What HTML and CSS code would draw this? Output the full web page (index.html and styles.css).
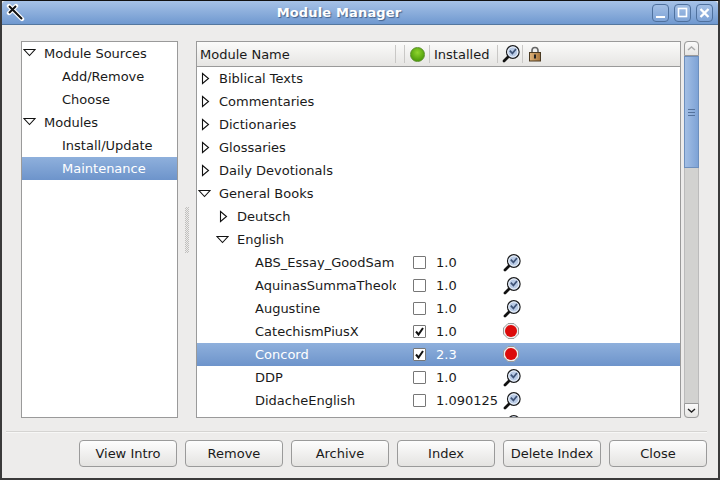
FILE: index.html
```html
<!DOCTYPE html>
<html>
<head>
<meta name="viewport" content="width=device-width, initial-scale=1">
<link rel="stylesheet" href="styles.css">
</head>
<body>

<svg class="defs" width="0" height="0">
  <defs>
    <linearGradient id="brass" x1="0" y1="0" x2="1" y2="0">
      <stop offset="0" stop-color="#e0b57c"/>
      <stop offset="1" stop-color="#a8743a"/>
    </linearGradient>
  </defs>
  <symbol id="tri-right" viewBox="0 0 9 13">
    <path d="M1.5 1.5 L7.5 6.5 L1.5 11.5 Z" fill="#fff" stroke="#111" stroke-width="1.1"/>
  </symbol>
  <symbol id="tri-down" viewBox="0 0 13 9">
    <path d="M1 1.5 L12 1.5 L6.5 7.5 Z" fill="#fff" stroke="#111" stroke-width="1.1"/>
  </symbol>
  <symbol id="lens" viewBox="0 0 18 18">
    <path d="M6 12 L2 16" stroke="#111" stroke-width="2.8" stroke-linecap="round"/>
    <circle cx="10.8" cy="7" r="6.3" fill="#b9cbe6" stroke="#1c1c1c" stroke-width="1.2"/>
    <circle cx="10.8" cy="7" r="5" fill="none" stroke="#eef3fa" stroke-width="1"/>
    <path d="M7.8 5.6 L10.4 8.4 L14 4" fill="none" stroke="#3f5478" stroke-width="1.7"/>
  </symbol>
  <symbol id="stop" viewBox="0 0 16 16">
    <path d="M5 .5 H11 L15.5 5 V11 L11 15.5 H5 L.5 11 V5 Z" fill="#eeeeee" stroke="#9a9a9a"/>
    <circle cx="8" cy="8" r="6" fill="#dc0a0a"/>
  </symbol>
</svg>

<div class="window">
  <div class="titlebar">
    <svg class="app-icon" width="20" height="20" viewBox="0 0 20 20">
      <path d="M3 3 L7.5 7.5 M10 3 L3 10 M7 7 L16 16" stroke="#fff" stroke-width="4.4" stroke-linecap="round"/>
      <path d="M3 3 L7.5 7.5 M10 3 L3 10 M7 7 L16 16" stroke="#111" stroke-width="2"/>
    </svg>
    <div class="title">Module Manager</div>
    <div class="wm-buttons">
      <div class="wm-btn"><svg width="15" height="16" viewBox="0 0 15 16"><path d="M3 12 H12" stroke="#fff" stroke-width="2"/></svg></div>
      <div class="wm-btn"><svg width="15" height="16" viewBox="0 0 15 16"><rect x="3.5" y="3.5" width="8" height="8" fill="none" stroke="#fff" stroke-width="1.6"/></svg></div>
      <div class="wm-btn"><svg width="15" height="16" viewBox="0 0 15 16"><path d="M3.5 4 L11.5 12 M11.5 4 L3.5 12" stroke="#fff" stroke-width="2.4"/></svg></div>
    </div>
  </div>

  <div class="content">
    <div class="panes">
      <div class="side-list">
        <div class="side-row"><svg class="tri-d" width="13" height="9"><use href="#tri-down"/></svg>Module Sources</div>
        <div class="side-row sub">Add/Remove</div>
        <div class="side-row sub">Choose</div>
        <div class="side-row"><svg class="tri-d" width="13" height="9"><use href="#tri-down"/></svg>Modules</div>
        <div class="side-row sub">Install/Update</div>
        <div class="side-row sub selected">Maintenance</div>
      </div>

      <div class="grip"></div>

      <div class="tree">
        <div class="tree-head">
          <div class="head-cell head-name">Module Name</div>
          <div class="head-cell head-gap"></div>
          <div class="head-cell head-dot"><span class="green-dot"></span></div>
          <div class="head-cell head-inst">Installed</div>
          <div class="head-cell head-lens"><svg width="18" height="18"><use href="#lens"/></svg></div>
          <div class="head-cell head-lock">
            <svg width="14" height="16" viewBox="0 0 14 16">
              <path d="M4 7 V4.5 A3 3 0 0 1 10 4.5 V7" fill="none" stroke="#666" stroke-width="1.6"/>
              <rect x="1.5" y="6.5" width="11" height="8.5" fill="url(#brass)" stroke="#4a3a22"/>
              <rect x="6" y="8.5" width="2" height="4" fill="#222"/>
            </svg>
          </div>
        </div>

        <div class="tree-body">
          <div class="row"><div class="name lvl0"><svg class="tri-r" width="9" height="13"><use href="#tri-right"/></svg>Biblical Texts</div></div>
          <div class="row"><div class="name lvl0"><svg class="tri-r" width="9" height="13"><use href="#tri-right"/></svg>Commentaries</div></div>
          <div class="row"><div class="name lvl0"><svg class="tri-r" width="9" height="13"><use href="#tri-right"/></svg>Dictionaries</div></div>
          <div class="row"><div class="name lvl0"><svg class="tri-r" width="9" height="13"><use href="#tri-right"/></svg>Glossaries</div></div>
          <div class="row"><div class="name lvl0"><svg class="tri-r" width="9" height="13"><use href="#tri-right"/></svg>Daily Devotionals</div></div>
          <div class="row"><div class="name lvl0 open"><svg class="tri-d" width="13" height="9"><use href="#tri-down"/></svg>General Books</div></div>
          <div class="row"><div class="name lvl1"><svg class="tri-r" width="9" height="13"><use href="#tri-right"/></svg>Deutsch</div></div>
          <div class="row"><div class="name lvl1 open"><svg class="tri-d" width="13" height="9"><use href="#tri-down"/></svg>English</div></div>

          <div class="row"><div class="name lvl2">ABS_Essay_GoodSam</div><span class="check"></span><div class="ver">1.0</div><svg class="act" width="18" height="18"><use href="#lens"/></svg></div>
          <div class="row"><div class="name lvl2">AquinasSummaTheologica</div><span class="check"></span><div class="ver">1.0</div><svg class="act" width="18" height="18"><use href="#lens"/></svg></div>
          <div class="row"><div class="name lvl2">Augustine</div><span class="check"></span><div class="ver">1.0</div><svg class="act" width="18" height="18"><use href="#lens"/></svg></div>
          <div class="row"><div class="name lvl2">CatechismPiusX</div><span class="check on"><svg width="11" height="11" viewBox="0 0 11 11"><path d="M2 5.5 L4.5 8.5 L9 2" fill="none" stroke="#111" stroke-width="2"/></svg></span><div class="ver">1.0</div><svg class="act stop" width="16" height="16"><use href="#stop"/></svg></div>
          <div class="row selected"><div class="name lvl2">Concord</div><span class="check on"><svg width="11" height="11" viewBox="0 0 11 11"><path d="M2 5.5 L4.5 8.5 L9 2" fill="none" stroke="#111" stroke-width="2"/></svg></span><div class="ver">2.3</div><svg class="act stop" width="16" height="16"><use href="#stop"/></svg></div>
          <div class="row"><div class="name lvl2">DDP</div><span class="check"></span><div class="ver">1.0</div><svg class="act" width="18" height="18"><use href="#lens"/></svg></div>
          <div class="row"><div class="name lvl2">DidacheEnglish</div><span class="check"></span><div class="ver">1.090125</div><svg class="act" width="18" height="18"><use href="#lens"/></svg></div>
          <div class="row"><div class="name lvl2"></div><span class="check"></span><div class="ver"></div><svg class="act" width="18" height="18"><use href="#lens"/></svg></div>
        </div>
      </div>

      <div class="scrollbar">
        <div class="sb-btn sb-up"><svg width="11" height="7" viewBox="0 0 11 7"><path d="M2 5 L5.5 2 L9 5" fill="none" stroke="#aaa" stroke-width="1.4"/></svg></div>
        <div class="sb-track">
          <div class="sb-thumb"><span></span><span></span><span></span></div>
        </div>
        <div class="sb-btn sb-down"><svg width="11" height="7" viewBox="0 0 11 7"><path d="M2 2 L5.5 5 L9 2" fill="none" stroke="#222" stroke-width="1.4"/></svg></div>
      </div>
    </div>

    <div class="separator"></div>

    <div class="buttons">
      <button class="btn">View Intro</button>
      <button class="btn">Remove</button>
      <button class="btn">Archive</button>
      <button class="btn">Index</button>
      <button class="btn">Delete Index</button>
      <button class="btn">Close</button>
    </div>
  </div>
</div>

</body>
</html>
```

FILE: styles.css
```css
* {
  box-sizing: border-box;
}

html, body {
  margin: 0;
  height: 100%;
  overflow: hidden;
}

body {
  background-color: #000;
  font-family: "DejaVu Sans", sans-serif;
  font-size: 13px;
  color: #1a1a1a;
}

.defs {
  position: absolute;
}

.window {
  width: 720px;
  height: 480px;
  display: flex;
  flex-direction: column;
  background-color: #edeceb;
  border-top: 1px solid #111;
  border-left: 2px solid #3a3a3a;
  border-right: 2px solid #3a3a3a;
  border-bottom: 2px solid #3a3a3a;
}

/* title bar */
.titlebar {
  height: 24px;
  flex: none;
  display: flex;
  align-items: center;
  padding: 0 5px 0 4px;
  background: linear-gradient(#a6c2e7, #7099d0);
  border-bottom: 1px solid #54779f;
  border-radius: 4px 4px 0 0;
}

.app-icon {
  flex: none;
}

.title {
  flex: 1;
  text-align: center;
  color: #fff;
  font-weight: bold;
  font-size: 13px;
  letter-spacing: 0.15px;
  text-shadow: 1px 1px 1px #43618a;
}

.wm-buttons {
  display: flex;
  gap: 5px;
}

.wm-btn {
  width: 17px;
  height: 18px;
  display: flex;
  align-items: center;
  justify-content: center;
  border: 1px solid #4f719e;
  border-radius: 4px;
  background: linear-gradient(#a3bfe5, #7ea3d6);
}

/* main area */
.content {
  flex: 1;
  display: flex;
  flex-direction: column;
  padding: 16px 11px 0 4px;
}

.panes {
  display: flex;
  height: 377px;
  padding-left: 15px;
}

.side-list {
  width: 157px;
  flex: none;
  background-color: #fff;
  border: 1px solid #9a9a9a;
}

.side-row {
  height: 23px;
  display: flex;
  align-items: center;
  padding-left: 22px;
  position: relative;
}

.side-row .tri-d {
  position: absolute;
  left: 1px;
  top: 6px;
}

.side-row.sub {
  padding-left: 40px;
}

.selected {
  background: linear-gradient(#8fb0dc, #6d94cb);
  color: #fff;
}

.grip {
  width: 18px;
  flex: none;
  position: relative;
}

.grip:after {
  content: "";
  position: absolute;
  left: 7px;
  top: 166px;
  width: 4px;
  height: 46px;
  background: repeating-conic-gradient(#c0bfbd 0 25%, transparent 0 50%) 0 0 / 2px 2px;
}

.tree {
  width: 485px;
  flex: none;
  display: flex;
  flex-direction: column;
  background-color: #fff;
  border: 1px solid #9a9a9a;
  overflow: hidden;
}

.tree-head {
  height: 25px;
  flex: none;
  display: flex;
  background: linear-gradient(#fbfbfa, #e6e5e3);
  border-bottom: 1px solid #9a9a9a;
}

.head-cell {
  display: flex;
  align-items: center;
  border-right: 1px solid #c9c8c6;
  margin: 3px 0;
}

.head-name {
  width: 199px;
  padding-left: 3px;
}

.head-gap {
  width: 9px;
}

.head-dot {
  width: 25px;
  padding-left: 5px;
}

.head-inst {
  width: 68px;
  padding-left: 4px;
}

.head-lens {
  width: 25px;
  padding-left: 4px;
}

.head-lock {
  border-right: none;
  padding-left: 5px;
}

.green-dot {
  width: 15px;
  height: 15px;
  border-radius: 50%;
  background: radial-gradient(circle at 50% 35%, #8fd42e, #4f9e0a 75%);
  border: 1px solid #5a8f2a;
}

.tree-body {
  flex: 1;
  overflow: hidden;
}

.row {
  height: 23px;
  display: flex;
  align-items: center;
}

.name {
  width: 199px;
  flex: none;
  height: 100%;
  display: flex;
  align-items: center;
  white-space: nowrap;
  overflow: hidden;
}

.lvl0 {
  padding-left: 4px;
}

.lvl0 .tri-r {
  margin-right: 9px;
}

.lvl1 {
  padding-left: 22px;
}

.lvl1 .tri-r {
  margin-right: 9px;
}

.lvl2 {
  padding-left: 58px;
}

.tri-d {
  flex: none;
}

.open {
  padding-left: 1px;
}

.open .tri-d {
  margin-right: 8px;
}

.lvl1.open {
  padding-left: 19px;
}

.check {
  flex: none;
  width: 13px;
  height: 13px;
  margin-left: 17px;
  display: flex;
  align-items: center;
  justify-content: center;
  background-color: #fff;
  border: 1px solid #777;
  border-radius: 1px;
}

.ver {
  width: 67px;
  flex: none;
  margin-left: 10px;
}

.row.selected .ver {
  color: #fff;
}

.act {
  flex: none;
}

.stop {
  margin-bottom: 1px;
}

/* scrollbar */
.scrollbar {
  width: 15px;
  flex: none;
  margin-left: 3px;
  display: flex;
  flex-direction: column;
  background-color: #d2d2d0;
  border-radius: 4px;
}

.sb-btn {
  height: 15px;
  flex: none;
  display: flex;
  align-items: center;
  justify-content: center;
  background: linear-gradient(#fafafa, #e6e5e3);
  border: 1px solid #9a9a9a;
}

.sb-up {
  border-radius: 4px 4px 0 0;
}

.sb-down {
  border-radius: 0 0 4px 4px;
}

.sb-track {
  flex: 1;
  border-left: 1px solid #bbb;
  border-right: 1px solid #bbb;
}

.sb-thumb {
  height: 112px;
  display: flex;
  flex-direction: column;
  align-items: center;
  justify-content: center;
  gap: 2px;
  background: linear-gradient(90deg, #a3bfe5, #7ea3d6);
  border: 1px solid #6d8fbd;
  margin: 0 -1px;
}

.sb-thumb span {
  width: 7px;
  height: 1px;
  background-color: #54729c;
}

/* bottom buttons */
.separator {
  height: 2px;
  margin-top: 13px;
  background-color: #d5d4d2;
  border-bottom: 1px solid #f7f7f6;
}

.buttons {
  display: flex;
  justify-content: flex-end;
  gap: 8px;
  margin-top: 7px;
}

.btn {
  width: 98px;
  height: 27px;
  padding: 0;
  font-family: "DejaVu Sans", sans-serif;
  font-size: 13px;
  color: #1a1a1a;
  background: linear-gradient(#fdfdfd, #e4e3e1);
  border: 1px solid #9a9a9a;
  border-radius: 4px;
}
```
